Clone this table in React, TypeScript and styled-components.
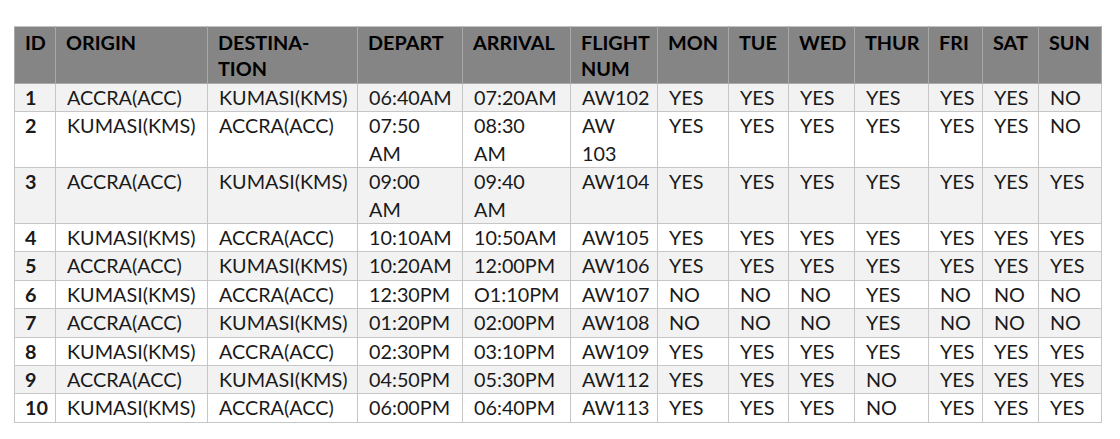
import React from "react";
import styled, { createGlobalStyle } from "styled-components";

const GlobalStyle = createGlobalStyle`
  html, body { margin: 0; padding: 0; background: #ffffff; }
  body { font-family: Lato, "Open Sans", "Liberation Sans", sans-serif; }
`;

const Page = styled.div`
  padding: 26px 0 0 14px;
  width: 1120px;
  height: 439px;
  box-sizing: border-box;
`;

const Table = styled.table`
  border-collapse: collapse;
  table-layout: fixed;
  width: 1088px;
  font-family: Lato, "Open Sans", "Liberation Sans", sans-serif;
  font-size: 19.8px;
  color: #1a1a1a;
`;

const HeadCell = styled.th`
  background: #858585;
  color: #000000;
  font-weight: 700;
  text-align: left;
  vertical-align: top;
  line-height: 26px;
  padding: 2px 2px 2px 10px;
  border: 1px solid #a9a9a9;
  border-top-color: #c4c4c4;
  white-space: nowrap;
`;

const Row = styled.tr<{ $shade: boolean }>`
  background: ${(p) => (p.$shade ? "#f2f2f2" : "#ffffff")};
`;

const Cell = styled.td<{ $bold?: boolean }>`
  text-align: left;
  vertical-align: top;
  line-height: 27.4px;
  padding: 0 2px 0 ${(p) => (p.$bold ? "10px" : "11px")};
  border: 1px solid #c6c6c6;
  font-weight: ${(p) => (p.$bold ? 700 : 400)};
  white-space: nowrap;
`;

const widths = [41, 152, 150, 105, 108, 87, 71, 60, 66, 74, 54, 56, 63];

const headers: string[][] = [
  ["ID"],
  ["ORIGIN"],
  ["DESTINA-", "TION"],
  ["DEPART"],
  ["ARRIVAL"],
  ["FLIGHT", "NUM"],
  ["MON"],
  ["TUE"],
  ["WED"],
  ["THUR"],
  ["FRI"],
  ["SAT"],
  ["SUN"],
];

const A = "ACCRA(ACC)";
const K = "KUMASI(KMS)";

const rows: string[][][] = [
  [["1"], [A], [K], ["06:40AM"], ["07:20AM"], ["AW102"], ["YES"], ["YES"], ["YES"], ["YES"], ["YES"], ["YES"], ["NO"]],
  [["2"], [K], [A], ["07:50", "AM"], ["08:30", "AM"], ["AW", "103"], ["YES"], ["YES"], ["YES"], ["YES"], ["YES"], ["YES"], ["NO"]],
  [["3"], [A], [K], ["09:00", "AM"], ["09:40", "AM"], ["AW104"], ["YES"], ["YES"], ["YES"], ["YES"], ["YES"], ["YES"], ["YES"]],
  [["4"], [K], [A], ["10:10AM"], ["10:50AM"], ["AW105"], ["YES"], ["YES"], ["YES"], ["YES"], ["YES"], ["YES"], ["YES"]],
  [["5"], [A], [K], ["10:20AM"], ["12:00PM"], ["AW106"], ["YES"], ["YES"], ["YES"], ["YES"], ["YES"], ["YES"], ["YES"]],
  [["6"], [K], [A], ["12:30PM"], ["O1:10PM"], ["AW107"], ["NO"], ["NO"], ["NO"], ["YES"], ["NO"], ["NO"], ["NO"]],
  [["7"], [A], [K], ["01:20PM"], ["02:00PM"], ["AW108"], ["NO"], ["NO"], ["NO"], ["YES"], ["NO"], ["NO"], ["NO"]],
  [["8"], [K], [A], ["02:30PM"], ["03:10PM"], ["AW109"], ["YES"], ["YES"], ["YES"], ["YES"], ["YES"], ["YES"], ["YES"]],
  [["9"], [A], [K], ["04:50PM"], ["05:30PM"], ["AW112"], ["YES"], ["YES"], ["YES"], ["NO"], ["YES"], ["YES"], ["YES"]],
  [["10"], [K], [A], ["06:00PM"], ["06:40PM"], ["AW113"], ["YES"], ["YES"], ["YES"], ["NO"], ["YES"], ["YES"], ["YES"]],
];

const Lines: React.FC<{ parts: string[] }> = ({ parts }) => (
  <>
    {parts.map((p, i) => (
      <React.Fragment key={i}>
        {i > 0 && <br />}
        {p}
      </React.Fragment>
    ))}
  </>
);

export default function App() {
  return (
    <>
      <GlobalStyle />
      <Page>
        <Table>
          <colgroup>
            {widths.map((w, i) => (
              <col key={i} style={{ width: w }} />
            ))}
          </colgroup>
          <thead>
            <tr>
              {headers.map((h, i) => (
                <HeadCell key={i}>
                  <Lines parts={h} />
                </HeadCell>
              ))}
            </tr>
          </thead>
          <tbody>
            {rows.map((r, ri) => (
              <Row key={ri} $shade={ri % 2 === 0}>
                {r.map((c, ci) => (
                  <Cell key={ci} $bold={ci === 0}>
                    <Lines parts={c} />
                  </Cell>
                ))}
              </Row>
            ))}
          </tbody>
        </Table>
      </Page>
    </>
  );
}
